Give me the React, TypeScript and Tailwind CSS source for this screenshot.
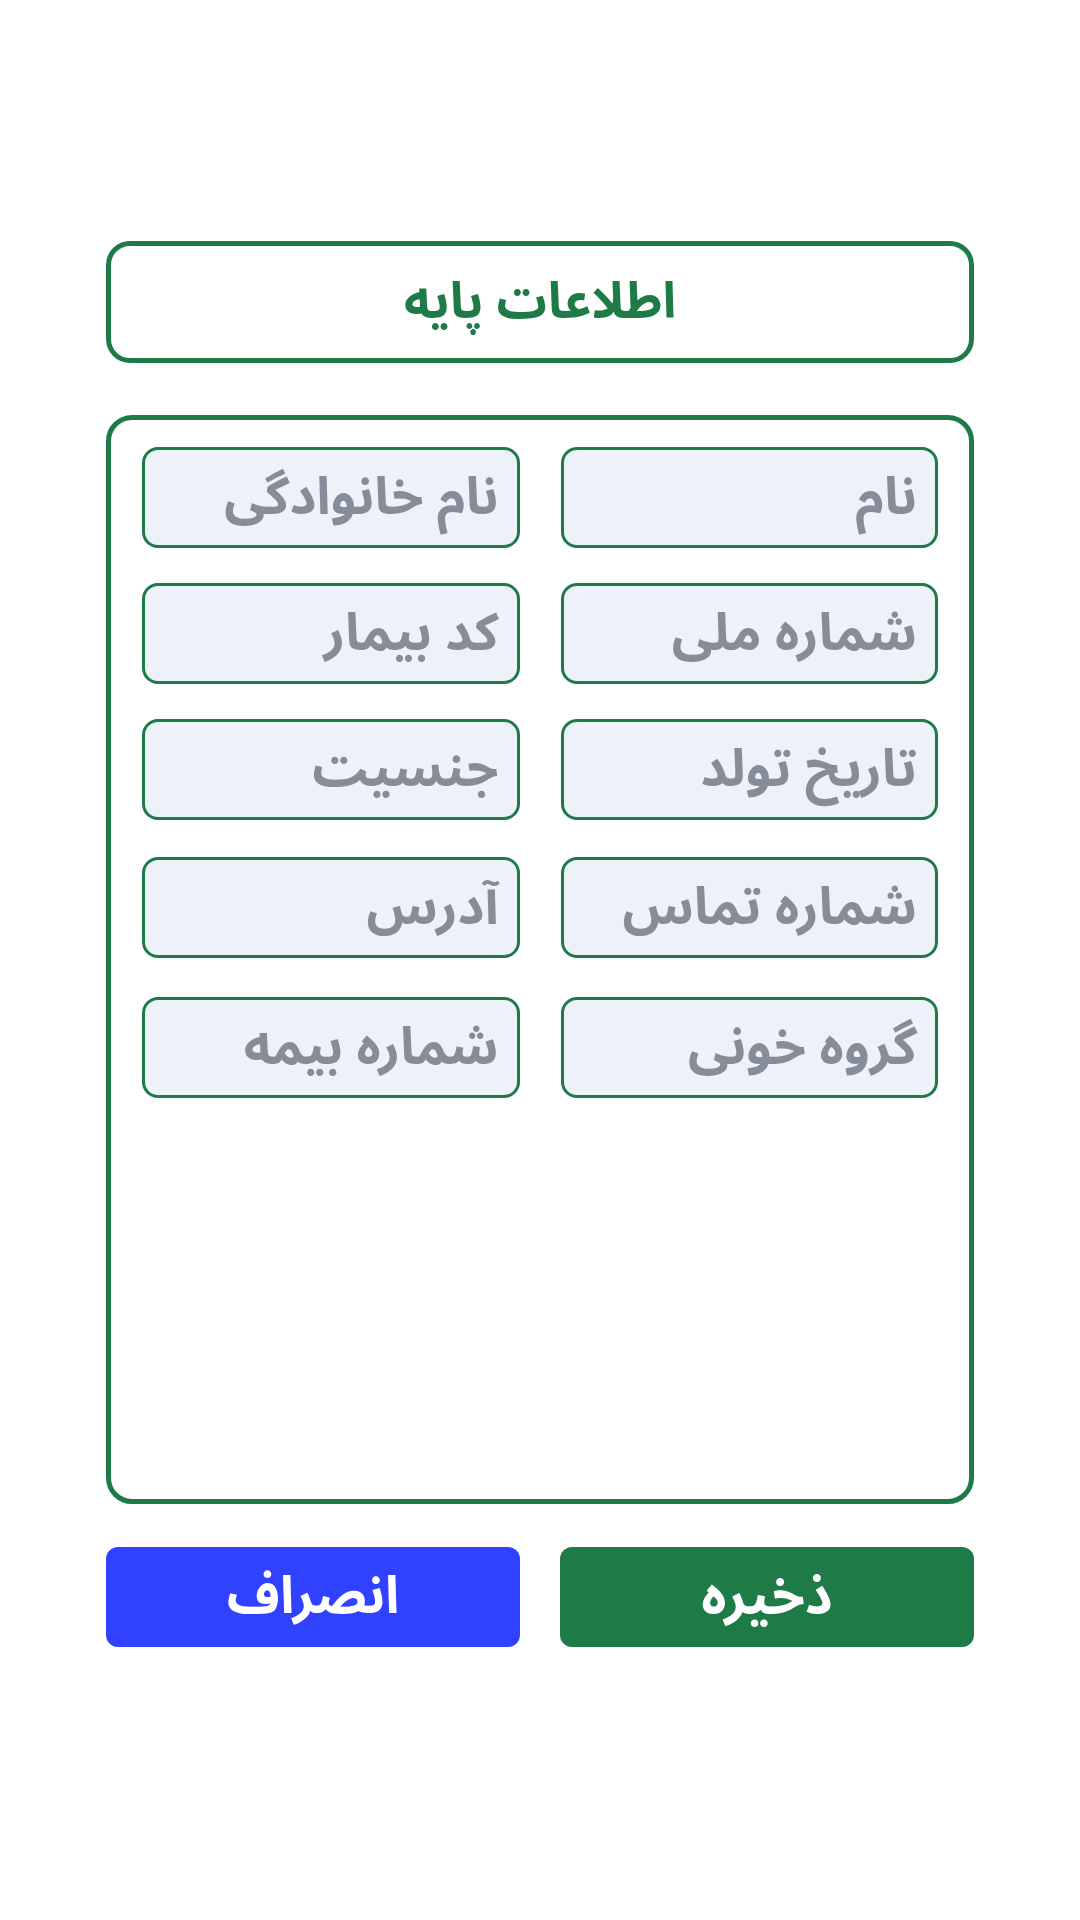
import React from 'react'

const ROWS = [
  ['نام', 'نام خانوادگی'],
  ['شماره ملی', 'کد بیمار'],
  ['تاریخ تولد', 'جنسیت'],
  ['شماره تماس', 'آدرس'],
  ['گروه خونی', 'شماره بیمه'],
]

const ROW_GAP = ['mt-0', 'mt-[35px]', 'mt-[35px]', 'mt-[37px]', 'mt-[39px]']

export default function App() {
  return (
    <div
      dir="rtl"
      className="min-h-[1920px] w-[1080px] bg-white"
      style={{ fontFamily: '"Noto Sans Arabic", "Noto Naskh Arabic", "DejaVu Sans", sans-serif' }}
    >
      <div className="mx-auto w-[868px] pt-[241px]">
        <div className="flex h-[122px] items-center justify-center rounded-[24px] border-[5px] border-[#1e7b48]">
          <h1 className="text-[50px] font-bold text-[#1e7b48]">اطلاعات پایه</h1>
        </div>

        <div className="mt-[52px] h-[1089px] rounded-[26px] border-[5px] border-[#1e7b48] px-[31px] pt-[27px]">
          {ROWS.map((row, i) => (
            <div key={i} className={`grid grid-cols-2 gap-x-[41px] ${ROW_GAP[i]}`}>
              {row.map(f => (
                <div
                  key={f}
                  className="flex h-[101px] items-center rounded-[16px] border-[3px] border-[#1e7b48] bg-[#edf2f8] px-[18px]"
                >
                  <span className="text-[52px] font-bold text-[#878c99]">{f}</span>
                </div>
              ))}
            </div>
          ))}
        </div>

        <div className="mt-[43px] grid grid-cols-2 gap-x-[40px]">
          <button className="h-[100px] rounded-[12px] bg-[#1e7b48] text-[54px] font-bold text-white">ذخیره</button>
          <button className="h-[100px] rounded-[12px] bg-[#3042ff] text-[52px] font-bold text-white">انصراف</button>
        </div>
      </div>
    </div>
  )
}
